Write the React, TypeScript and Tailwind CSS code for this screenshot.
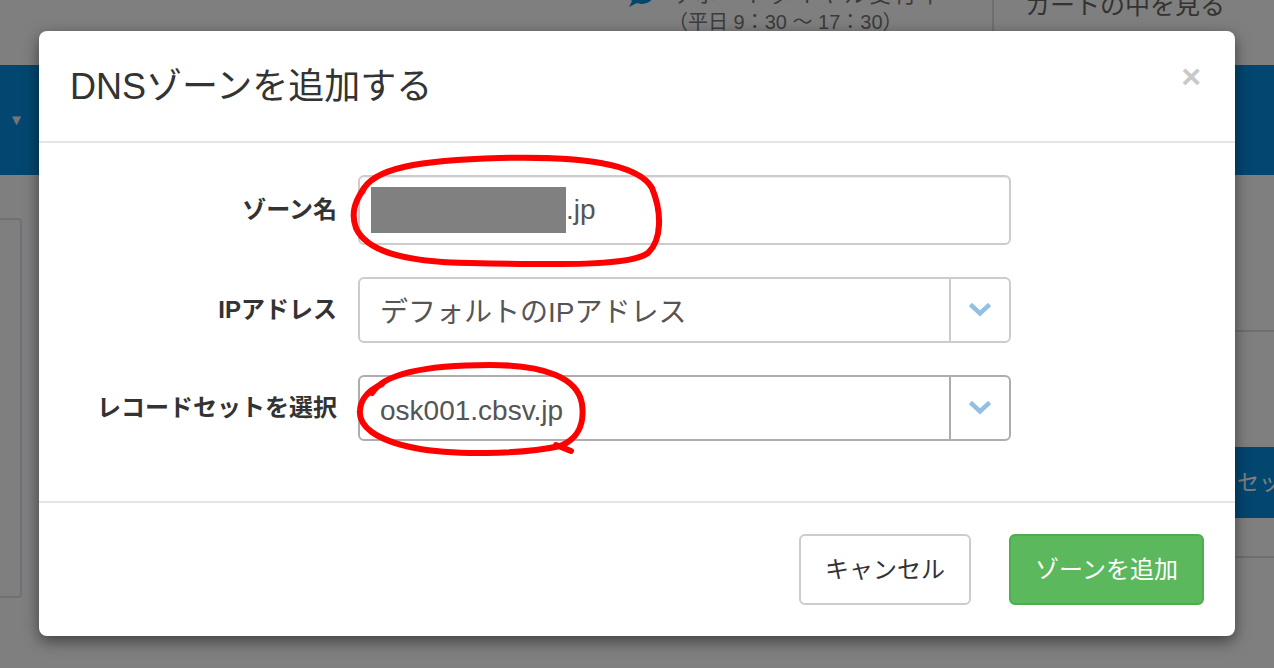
import React from 'react';

const FONT = "font-[family-name:'Liberation_Sans','Noto_Sans_CJK_JP',sans-serif]";

const Chevron: React.FC = () => (
  <svg width="22" height="14" viewBox="0 0 22 14" fill="none">
    <polyline points="3,3 11,10.5 19,3" stroke="#93bfe6" strokeWidth="4.5" strokeLinecap="square" />
  </svg>
);

const Row: React.FC<{ label: string; children: React.ReactNode }> = ({ label, children }) => (
  <div className="flex items-center">
    <label className="w-[268px] pr-[1px] text-right text-[24px] font-bold text-[#333]">{label}</label>
    <div className="ml-[20px] w-[653px]">{children}</div>
  </div>
);

const SelectBox: React.FC<{ value: string; focused?: boolean }> = ({ value, focused }) => (
  <div
    className={`flex h-[66px] items-stretch rounded-[6px] border-2 bg-white ${
      focused ? 'border-[#adadad]' : 'border-[#cccccc]'
    }`}
  >
    <div className="flex flex-1 items-center pl-[20px] pt-[6px] text-[28px] text-[#555]">{value}</div>
    <div className={`flex w-[60px] items-center justify-center border-l-2 ${focused ? 'border-[#adadad]' : 'border-[#cccccc]'}`}>
      <Chevron />
    </div>
  </div>
);

export default function App() {
  return (
    <div className={`relative h-[668px] w-[1274px] overflow-hidden bg-white ${FONT}`}>
      {/* page behind the dialog */}
      <header className="flex h-[65px]">
        <div className="flex-1" />
        <div className="-mt-[18px] flex w-[364px] items-start">
          <svg width="26" height="22" viewBox="0 0 26 22" className="mt-[3px]">
            <path d="M13 0C6 0 0 4 0 9c0 3 2 5 4 7l-3 6 8-4c1 0 3 1 4 1 7 0 13-4 13-10S20 0 13 0z" fill="#0a8cdc" />
          </svg>
          <div className="ml-[16px] flex flex-col text-[#777]">
            <span className="text-[22px] leading-[26px] tracking-[3px]">サポートダイヤル受付中</span>
            <span className="-ml-[2px] text-[20px] leading-[28px]">（平日 9：30 ～ 17：30）</span>
          </div>
        </div>
        <div className="flex w-[282px] items-start border-l-2 border-[#dddddd] pl-[31px]">
          <span className="-mt-[13px] text-[25px] text-[#666]">カートの中を見る</span>
        </div>
      </header>
      <nav className="flex h-[110px] items-center bg-[#068ee0] px-[9px]">
        <span className="text-[15px] text-[#e8eef5]">▼</span>
      </nav>
      <div className="flex">
        <aside className="mt-[43px] h-[380px] w-[22px] rounded-r-[4px] border-2 border-l-0 border-[#dce3ea]" />
        <div className="flex-1" />
        <div className="flex w-[39px] flex-col overflow-hidden">
          <div className="h-[155px]" />
          <div className="h-[117px] border-t-2 border-[#dddddd]" />
          <div className="flex h-[71px] items-center whitespace-nowrap bg-[#068ee0] pl-[2px] text-[22px] text-white">セット</div>
          <div className="h-[40px] border-b-2 border-[#dddddd]" />
        </div>
      </div>

      {/* backdrop */}
      <div className="absolute inset-0 bg-black/50" />

      {/* modal */}
      <div className="absolute left-[39px] top-[31px] w-[1196px] rounded-[8px] bg-white shadow-[0_5px_15px_rgba(0,0,0,0.5)]">
        <div className="flex h-[112px] items-center justify-between border-b-2 border-[#e5e5e5] px-[31px]">
          <h4 className="mt-[2px] text-[36px] font-normal text-[#333]">DNSゾーンを追加する</h4>
          <span className="mb-[20px] mr-[3px] text-[34px] font-bold leading-none text-[#c9c9c9]">×</span>
        </div>

        <div className="flex flex-col gap-[32px] px-[31px] pb-[60px] pt-[32px]">
          <Row label="ゾーン名">
            <div className="flex h-[70px] items-center rounded-[6px] border-2 border-[#cccccc] bg-white pl-[11px] text-[28px] text-[#555] shadow-[inset_0_1px_1px_rgba(0,0,0,0.075)]">
              <span className="h-[46px] w-[195px] bg-[#808080]" />
              <span>.jp</span>
            </div>
          </Row>
          <Row label="IPアドレス">
            <SelectBox value="デフォルトのIPアドレス" />
          </Row>
          <Row label="レコードセットを選択">
            <SelectBox value="osk001.cbsv.jp" focused />
          </Row>
        </div>

        <div className="flex justify-end gap-[38px] border-t-2 border-[#e5e5e5] px-[31px] pb-[31px] pt-[31px]">
          <button className="h-[71px] w-[172px] rounded-[6px] border-2 border-[#cccccc] bg-white text-[24px] text-[#333]">
            キャンセル
          </button>
          <button className="h-[71px] w-[195px] rounded-[6px] border-2 border-[#4cae4c] bg-[#5cb85c] text-[24px] text-white">
            ゾーンを追加
          </button>
        </div>
      </div>

      {/* red hand-drawn annotations */}
      <svg className="pointer-events-none absolute inset-0" width="1274" height="668" viewBox="0 0 1274 668" fill="none">
        <path
          d="M362 192 C372 168 420 160 500 158 C580 156 638 163 652 188 C662 212 662 240 648 253 C630 266 560 265 470 263 C400 262 366 250 356 228 C351 214 354 203 364 188"
          stroke="#ff0000"
          strokeWidth="6"
          strokeLinecap="round"
        />
        <path
          d="M372 393 C385 372 430 365 490 365 C545 365 578 378 582 404 C585 426 576 440 560 446 C520 455 450 455 415 448 C375 440 358 426 360 410 C361 400 366 392 382 384 M556 445 L571 451"
          stroke="#ff0000"
          strokeWidth="6"
          strokeLinecap="round"
        />
      </svg>
    </div>
  );
}
